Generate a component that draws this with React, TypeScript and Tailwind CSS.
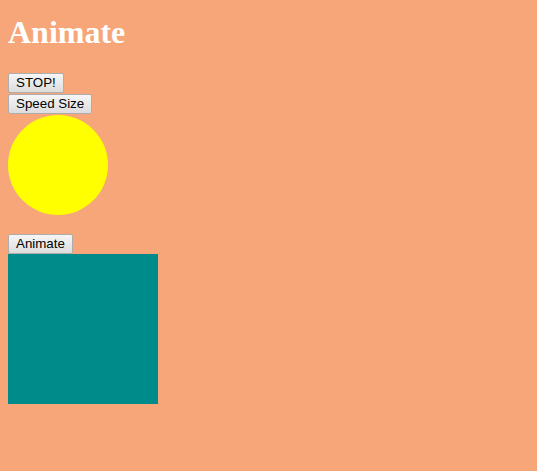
const btn =
  "block border border-[#adadad] bg-gradient-to-b from-[#f6f6f6] to-[#dddddd] rounded-[2px] px-[7px] h-[20px] leading-[18px] text-[13.33px] text-black font-['Liberation_Sans',Arial,sans-serif]";

export default function App() {
  return (
    <div className="min-h-[471px] bg-[#f7a67a] px-2 pt-[14px]">
      <h1 className="text-[32px] leading-[37px] font-bold text-white font-['Liberation_Serif',serif]">
        Animate
      </h1>
      <div className="mt-[22px]">
        <button className={btn}>STOP!</button>
        <button className={btn + " mt-px"}>Speed Size</button>
      </div>
      <div className="mt-[1px] h-[100px] w-[100px] rounded-full bg-[#ffff00]" />
      <button className={btn + " mt-[19px]"}>Animate</button>
      <div className="h-[150px] w-[150px] bg-[#008b8b]" />
    </div>
  );
}
